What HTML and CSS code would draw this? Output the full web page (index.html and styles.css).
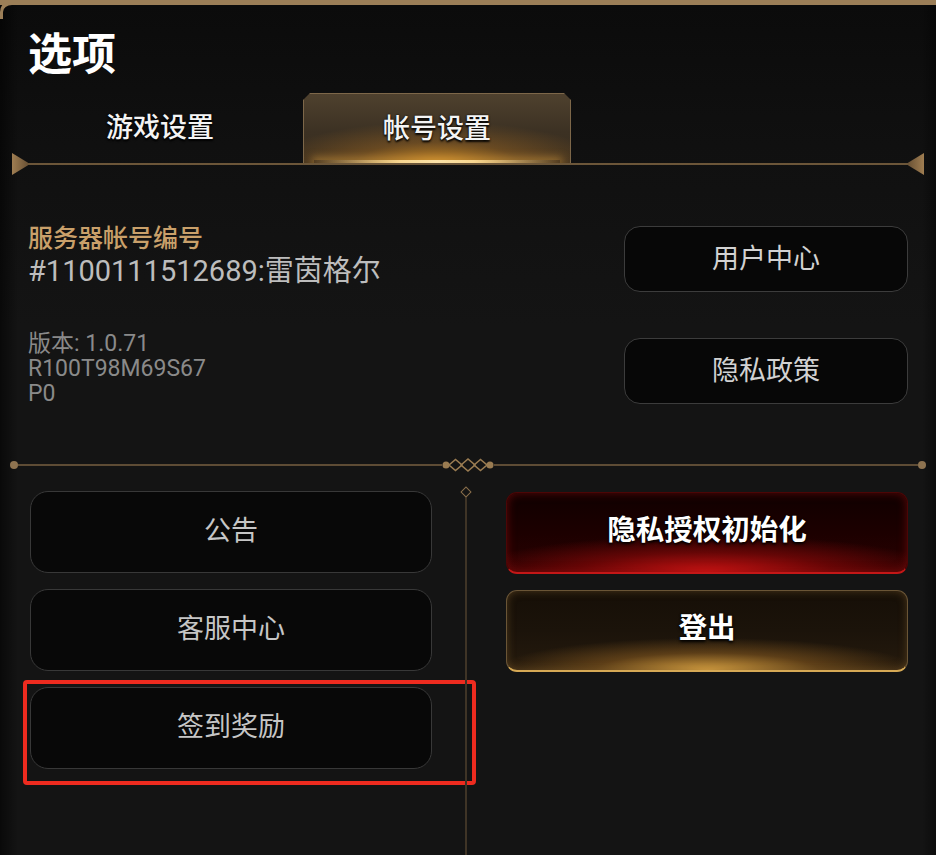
FILE: index.html
```html
<!DOCTYPE html>
<html lang="zh-CN">
<head>
<meta charset="utf-8">
<title>选项</title>
<link rel="stylesheet" href="styles.css">
</head>
<body>
<div class="frame">
  <h1 class="title">选项</h1>

  <div class="tabs">
    <div class="tab">游戏设置</div>
    <div class="tab tab-active">帐号设置</div>
  </div>

  <section class="info">
    <div class="info-left">
      <div class="label">服务器帐号编号</div>
      <div class="account">#1100111512689:雷茵格尔</div>
      <div class="version">版本: 1.0.71<br>R100T98M69S67<br>P0</div>
    </div>
    <div class="info-right">
      <div class="btn btn-outline">用户中心</div>
      <div class="btn btn-outline">隐私政策</div>
    </div>
  </section>

  <div class="divider">
    <span class="dot"></span>
    <span class="rule"></span>
    <svg class="ornament" width="52" height="16" viewBox="0 0 52 16">
      <circle cx="4" cy="8" r="3.5" fill="#9a7c52"/>
      <path d="M7 8 L13.5 2.5 L20 8 L13.5 13.5 Z" fill="none" stroke="#9a7c52" stroke-width="1.6"/>
      <path d="M19 8 L26 2 L33 8 L26 14 Z" fill="none" stroke="#9a7c52" stroke-width="1.6"/>
      <path d="M32 8 L38.5 2.5 L45 8 L38.5 13.5 Z" fill="none" stroke="#9a7c52" stroke-width="1.6"/>
      <circle cx="48" cy="8" r="3.5" fill="#9a7c52"/>
    </svg>
    <span class="rule"></span>
    <span class="dot"></span>
  </div>

  <section class="actions">
    <div class="col">
      <div class="btn btn-dark">公告</div>
      <div class="btn btn-dark">客服中心</div>
      <div class="mark">
        <div class="btn btn-dark">签到奖励</div>
      </div>
    </div>
    <div class="vline-wrap">
      <div class="vline"></div>
    </div>
    <div class="col">
      <div class="btn btn-red">隐私授权初始化</div>
      <div class="btn btn-gold">登出</div>
    </div>
  </section>
</div>
</body>
</html>
```

FILE: styles.css
```css
* { box-sizing: border-box; }

html, body {
  margin: 0;
  padding: 0;
  background: #111;
}

body {
  font-family: Roboto, "Noto Sans CJK SC", sans-serif;
}

.frame {
  position: relative;
  width: 936px;
  height: 855px;
  overflow: hidden;
  display: flex;
  flex-direction: column;
  border-top: 5px solid #9b7e57;
  background:
    linear-gradient(90deg, rgba(0,0,0,0.55) 0, rgba(0,0,0,0) 18px, rgba(0,0,0,0) calc(100% - 14px), rgba(0,0,0,0.4) 100%),
    linear-gradient(180deg, #0b0b0b 0, #101010 140px, #141414 320px, #141414 100%);
}

.frame::before {
  content: "";
  position: absolute;
  top: -5px;
  left: 0;
  width: 16px;
  height: 14px;
  border-top: 5px solid #9b7e57;
  border-left: 3px solid #9b7e57;
  border-top-left-radius: 12px;
}

.title {
  margin: 24px 0 0 28px;
  font-family: "Noto Sans CJK SC", sans-serif;
  font-size: 44px;
  line-height: 44px;
  font-weight: 700;
  color: #ffffff;
  letter-spacing: 0;
}

/* ---------- tabs ---------- */
.tabs {
  position: relative;
  margin: 20px 12px 0 12px;
  height: 72px;
  padding-left: 14px;
  display: flex;
  gap: 9px;
  border-bottom: 2px solid #6c5639;
}

.tabs::before,
.tabs::after {
  content: "";
  position: absolute;
  bottom: -12px;
  width: 16px;
  height: 22px;
  background: linear-gradient(90deg, #a07e52, #6a5235);
}

.tabs::before {
  left: 0;
  clip-path: polygon(0 0, 100% 44%, 100% 56%, 0 100%);
}

.tabs::after {
  right: 0;
  background: linear-gradient(270deg, #a07e52, #6a5235);
  clip-path: polygon(100% 0, 0 44%, 0 56%, 100% 100%);
}

.tab {
  position: relative;
  width: 268px;
  height: 70px;
  padding-bottom: 5px;
  display: flex;
  align-items: center;
  justify-content: center;
  font-family: "Noto Sans CJK SC", sans-serif;
  font-size: 27px;
  font-weight: 500;
  color: #f4f4f4;
  text-shadow: 0 0 2px #000, 0 2px 2px rgba(0,0,0,0.9);
}

.tab-active {
  border: 1px solid #7d6749;
  border-bottom: none;
  clip-path: polygon(7px 0, calc(100% - 7px) 0, 100% 7px, 100% 100%, 0 100%, 0 7px);
  background:
    radial-gradient(ellipse 62% 60% at 50% 100%, rgba(222,150,40,0.85) 0, rgba(160,105,35,0.45) 50%, rgba(0,0,0,0) 100%),
    linear-gradient(180deg, #4f412e 0, #3c3123 55%, #3a2e1f 100%);
}

.tab-active::after {
  content: "";
  position: absolute;
  left: 10px;
  right: 10px;
  bottom: 0;
  height: 3px;
  background: linear-gradient(90deg, rgba(240,200,120,0) 0, #f7d690 35%, #fbe2a8 50%, #f7d690 65%, rgba(240,200,120,0) 100%);
  box-shadow: 0 0 8px 2px rgba(230,170,70,0.55);
}

/* ---------- info ---------- */
.info {
  display: flex;
  justify-content: space-between;
  margin-top: 61px;
  padding: 0 28px;
}

.info-left {
  display: flex;
  flex-direction: column;
}

.label {
  font-family: "Noto Sans CJK SC", sans-serif;
  font-size: 25px;
  line-height: 24px;
  margin-top: -2px;
  font-weight: 500;
  color: #c9a06a;
}

.account {
  margin-top: 7px;
  font-size: 29px;
  line-height: 32px;
  color: #bdbdbd;
}

.version {
  margin-top: 44px;
  font-size: 23px;
  line-height: 25px;
  color: #8a8a8a;
}

.info-right {
  width: 284px;
  display: flex;
  flex-direction: column;
  gap: 46px;
}

.btn {
  display: flex;
  align-items: center;
  justify-content: center;
  font-family: "Noto Sans CJK SC", sans-serif;
}

.btn-outline {
  height: 66px;
  padding-bottom: 5px;
  border-radius: 16px;
  border: 1.5px solid #3c3c3c;
  background: #070707;
  color: #d2d2d2;
  font-size: 27px;
}

/* ---------- divider ---------- */
.divider {
  display: flex;
  align-items: center;
  height: 16px;
  margin: 51px 10px 0 10px;
}

.dot {
  width: 8px;
  height: 8px;
  border-radius: 50%;
  background: #8e7350;
  flex: none;
}

.rule {
  flex: 1;
  height: 2px;
  background: #5e4c35;
}

.ornament {
  flex: none;
  display: block;
}

/* ---------- actions ---------- */
.actions {
  flex: 1;
  margin-top: 18px;
  padding-left: 30px;
  display: grid;
  grid-template-columns: 402px 74px 402px;
  align-items: start;
}

.col {
  display: flex;
  flex-direction: column;
  gap: 16px;
}

.btn-dark {
  height: 82px;
  padding-bottom: 8px;
  border-radius: 18px;
  border: 1.5px solid #383838;
  background: #080808;
  color: #c6c6c6;
  font-size: 27px;
}

.vline-wrap {
  align-self: stretch;
  display: flex;
  justify-content: flex-start;
  padding-left: 33px;
}

.vline {
  position: relative;
  width: 2px;
  margin-top: 3px;
  background: #3f3426;
}

.vline::before {
  content: "";
  position: absolute;
  top: -6px;
  left: -3px;
  width: 6px;
  height: 6px;
  border: 1.5px solid #8a6f4c;
  background: #141414;
  transform: rotate(45deg);
}

.mark {
  position: relative;
}

.mark::after {
  content: "";
  position: absolute;
  top: -7px;
  left: -7px;
  right: -44px;
  bottom: -16px;
  border: 4px solid #ee2b1f;
  border-radius: 4px;
  pointer-events: none;
}

.btn-red,
.btn-gold {
  height: 82px;
  padding-bottom: 11px;
  border-radius: 11px;
  color: #ffffff;
  font-size: 28.5px;
  font-weight: 700;
  text-shadow: 0 0 2px #000, 0 2px 3px rgba(0,0,0,0.9);
}

.btn-red {
  margin-top: 1px;
  border: 1px solid #4c0606;
  border-bottom: 2px solid #c41717;
  background:
    radial-gradient(ellipse 70% 55% at 50% 100%, rgba(210,20,20,0.95) 0, rgba(130,8,8,0.7) 45%, rgba(60,0,0,0) 85%),
    linear-gradient(180deg, #100000 0, #1c0000 50%, #2a0202 100%);
  box-shadow: inset 0 0 10px rgba(150,15,15,0.55);
}

.btn-gold {
  border: 1.5px solid #6a5536;
  border-bottom: 2px solid #d6a955;
  background:
    radial-gradient(ellipse 62% 48% at 50% 100%, rgba(235,175,70,0.9) 0, rgba(150,100,35,0.5) 45%, rgba(60,40,15,0) 85%),
    linear-gradient(180deg, #160f07 0, #1b130a 50%, #251a0d 100%);
  box-shadow: inset 0 0 8px rgba(130,95,45,0.5);
}
```
